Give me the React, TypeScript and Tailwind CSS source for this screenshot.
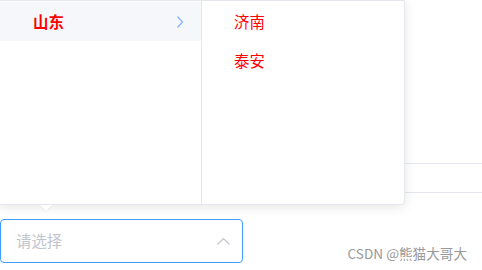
const font = { fontFamily: '"Microsoft YaHei", "Noto Sans CJK SC", "Liberation Sans", sans-serif' };

function ChevronRight() {
  return (
    <svg width="8" height="14" viewBox="0 0 8 14" fill="none">
      <path d="M1.5 1.5 L6.5 7 L1.5 12.5" stroke="#7fb2ff" strokeWidth="1.2" />
    </svg>
  );
}

function ChevronUp() {
  return (
    <svg width="15" height="9" viewBox="0 0 15 9" fill="none">
      <path d="M1.5 7.5 L7.5 1.5 L13.5 7.5" stroke="#c0c4cc" strokeWidth="1.2" />
    </svg>
  );
}

export default function App() {
  const cities = ['济南', '泰安'];

  return (
    <div className="relative w-[482px] h-[270px] bg-white overflow-hidden" style={font}>
      {/* page behind the popper */}
      <div className="flex flex-col">
        <div className="h-[163px]" />
        <div className="h-[29px] border-t border-[#e4e7ed]" />
        <div className="h-[27px] border-t border-[#e4e7ed]" />
        <div className="w-[243px] h-[44px] border border-[#409eff] rounded-[4px] flex items-center justify-between pl-[15px] pr-[11px]">
          <span className="text-[15.4px] text-[#c0c4cc]">请选择</span>
          <ChevronUp />
        </div>
      </div>

      {/* cascader popper */}
      <div className="absolute left-[-2px] top-0 w-[407px] h-[205px] bg-white border border-[#e4e7ed] rounded-br-[4px] shadow-[0_2px_12px_0_rgba(0,0,0,0.1)] flex">
        <div className="w-[203px] border-r border-[#e4e7ed] pt-[1px]">
          <div className="h-[39px] bg-[#f5f7fa] flex items-center justify-between pl-[34px] pr-[17px]">
            <span className="text-[15.4px] font-bold text-[#ff0000]">山东</span>
            <ChevronRight />
          </div>
        </div>
        <div className="flex-1 pt-[1px]">
          {cities.map((c) => (
            <div key={c} className="h-[39px] flex items-center pl-[32px] text-[15.4px] text-[#ff0000]">
              {c}
            </div>
          ))}
        </div>
        <div className="absolute left-[41px] bottom-[-7px] w-0 h-0 border-l-[6px] border-r-[6px] border-t-[6px] border-l-transparent border-r-transparent border-t-white drop-shadow-[0_1px_1px_rgba(0,0,0,0.06)]" />
      </div>

      <div className="absolute right-[15px] bottom-[9px] text-[13.6px] leading-none text-[#9a9a9a]">
        CSDN @熊猫大哥大
      </div>
    </div>
  );
}
